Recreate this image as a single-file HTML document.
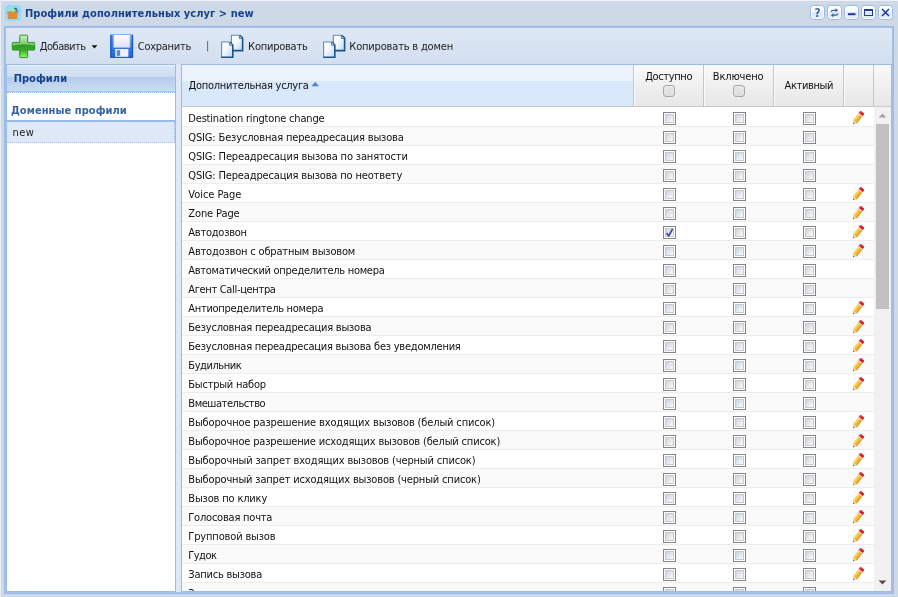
<!DOCTYPE html>
<html lang="ru"><head><meta charset="utf-8"><title>Профили дополнительных услуг</title>
<style>
html,body{margin:0;padding:0;}
body{width:898px;height:597px;overflow:hidden;background:#ced9e7;font-family:"DejaVu Sans Condensed","Liberation Sans",sans-serif;font-size:11px;color:#000;position:relative;}
*{box-sizing:border-box;}
.abs{position:absolute;}
#win{left:0;top:0;width:898px;height:597px;background:#ced9e7;border-top:1px solid #eef2f8;border-left:1px solid #e9eef6;}
#wrap{left:0;top:0;width:898px;height:597px;will-change:transform;}
#title{left:25px;top:7px;font-weight:bold;font-size:11px;color:#15428b;line-height:14px;white-space:nowrap;}
.tool{position:absolute;top:5px;width:15px;height:15px;}
#body{left:4px;top:26px;width:890px;height:568px;border:1px solid #99bbe8;background:#dfe8f6;}
#body2{left:5px;top:27px;width:888px;height:566px;border:1px solid #a3c1ea;background:#dfe8f6;}
#tbar{left:6px;top:28px;width:886px;height:36px;background:linear-gradient(#dfe8f5,#d2dff0);}
.tbtxt{position:absolute;top:40px;line-height:14px;color:#222;white-space:nowrap;}
.ico{position:absolute;top:34px;width:24px;height:24px;}
#left{left:6px;top:64px;width:170px;height:528px;border:1px solid #99bbe8;background:#fff;}
#lhead{left:0;top:0;width:168px;height:27px;background:linear-gradient(#f0f5fc 0,#f0f5fc 1px,#d9e5f5 1px,#ccddf2 12px,#b5cbea 12px,#cbdcf2 26px);border-bottom:1px solid #c3c3c3;}
#ldot{left:0;top:27px;width:168px;height:0;border-top:1px dotted #8db2e3;}
#gline{left:0;top:55px;width:168px;height:2px;background:#99bbe8;}
#lhead span{position:absolute;left:8.6px;top:7px;font-weight:bold;color:#15428b;line-height:14px;}
#dom{left:4px;top:39px;font-weight:bold;color:#3764a0;line-height:14px;white-space:nowrap;}
#sel{left:0;top:57px;width:168px;height:21px;background:#dfe8f6;border-right:1px dotted #a3bae9;border-bottom:1px dotted #a3bae9;}
#sel span{position:absolute;left:5.6px;top:4px;line-height:14px;color:#222;letter-spacing:0.35px;}
#grid{left:181px;top:64px;width:711px;height:528px;border:1px solid #99bbe8;background:#fff;overflow:hidden;}
#ghead{left:0;top:0;width:709px;height:42px;background:linear-gradient(#f9f9f9,#e8e7e7);border-bottom:1px solid #c9c9c9;}
.hd{position:absolute;top:0;height:41px;border-right:1px solid #c6c6c6;border-left:1px solid #fbfbfb;text-align:center;color:#111;}
.hd span{white-space:nowrap;}
#h0{left:0;width:452px;background:linear-gradient(#edf4fd 0,#eaf2fc 38%,#d9e8fb 40%,#d9e8fb 100%);border-left:none;border-right:1px solid #aaccf6;text-align:left;}
.hcb{position:absolute;left:28px;top:20px;width:12px;height:12px;border:1px solid #a8a8a8;border-radius:3px;background:linear-gradient(#e9e9e9,#dddddd);}
#rows{left:0;top:43px;width:692px;height:483px;overflow:hidden;}
.row{height:19px;width:692px;border-bottom:1px solid #ededed;background:#fff;position:relative;}
.row.alt{background:#fafafa;}
.row>div{position:absolute;top:0;height:18px;}
.c0{left:6.3px;top:2px !important;line-height:17px;white-space:nowrap;color:#111;}
.c1{width:70px;}
.row .c1:nth-child(2){left:452px;}
.row .c1:nth-child(3){left:522px;}
.row .c1:nth-child(4){left:592px;}
.c2{left:662px;width:30px;}
.cb{position:absolute;left:29px;top:4px;width:13px;height:13px;border:1px solid #858585;background:#fff;}
.cb:before{content:"";position:absolute;left:1px;top:1px;width:7px;height:7px;border:1px solid #c6c9cd;background:linear-gradient(135deg,#cfd4da 0,#e6e9ec 55%,#fbfbfb 100%);}
.cb svg{position:absolute;left:-1px;top:-1px;}
.pen{position:absolute;left:6px;top:2px;}
#sb{left:692px;top:42px;width:17px;height:484px;background:#f1f1f1;}
#thumb{left:2px;top:17px;width:13px;height:185px;background:#c1c1c1;}
#r0{letter-spacing:-0.187px;}
#r1{letter-spacing:-0.154px;}
#r2{letter-spacing:-0.142px;}
#r3{letter-spacing:-0.154px;}
#r4{letter-spacing:-0.020px;}
#r5{letter-spacing:-0.112px;}
#r6{letter-spacing:-0.240px;}
#r7{letter-spacing:-0.185px;}
#r8{letter-spacing:-0.280px;}
#r9{letter-spacing:-0.329px;}
#r10{letter-spacing:-0.286px;}
#r11{letter-spacing:-0.219px;}
#r12{letter-spacing:-0.229px;}
#r13{letter-spacing:-0.450px;}
#r14{letter-spacing:-0.225px;}
#r15{letter-spacing:-0.435px;}
#r16{letter-spacing:-0.148px;}
#r17{letter-spacing:-0.162px;}
#r18{letter-spacing:-0.150px;}
#r19{letter-spacing:-0.164px;}
#r20{letter-spacing:-0.165px;}
#r21{letter-spacing:-0.219px;}
#r22{letter-spacing:-0.153px;}
#r23{letter-spacing:-0.540px;}
#r24{letter-spacing:-0.224px;}
#t0{letter-spacing:-0.489px;margin-left:-0.54px;}
#t1{letter-spacing:-0.270px;margin-left:-0.54px;}
#t2{letter-spacing:-0.240px;margin-left:-0.90px;}
#t3{letter-spacing:-0.181px;margin-left:-1.44px;}
#title{letter-spacing:0.055px;}
#lh{letter-spacing:0.060px;margin-left:-1.98px;}
#dom{letter-spacing:0.060px;}
#h0t{letter-spacing:-0.279px;margin-left:0.18px;}
#h1t{letter-spacing:-0.361px;margin-left:-0.36px;}
#h2t{letter-spacing:-0.155px;margin-left:-0.90px;}
#h3t{letter-spacing:-0.360px;margin-left:-0.18px;}

</style></head><body>
<svg width="0" height="0" style="position:absolute"><defs>
<linearGradient id="tg" x1="0" y1="0" x2="0" y2="1"><stop offset="0" stop-color="#fff"/><stop offset="0.45" stop-color="#f4f8fe"/><stop offset="0.5" stop-color="#d9e7fb"/><stop offset="1" stop-color="#e4eefc"/></linearGradient>
<g id="toolbg"><rect x="0.5" y="0.5" width="14" height="14" rx="3" fill="#fff" stroke="#94b7e6"/><rect x="2" y="2" width="11" height="11" fill="url(#tg)"/></g>
<linearGradient id="pg" x1="0" y1="0" x2="1" y2="1"><stop offset="0" stop-color="#fff"/><stop offset="0.45" stop-color="#f4f8fe"/><stop offset="1" stop-color="#bcd6f6"/></linearGradient>
<g id="page"><path d="M0.8 0.8 H9 L12 3.8 V16 H0.8 Z" fill="url(#pg)"/><path d="M0.8 16.4 V0.8 H9" fill="none" stroke="#5f8fb5" stroke-width="1.1"/><path d="M9 0.8 L12 3.8 V16.2 H0.4" fill="none" stroke="#1b5587" stroke-width="1.6"/><path d="M8.8 1.3 V4 H11.5" fill="#dbe9fb" stroke="#2d6a9c" stroke-width="0.9"/></g>
<g id="copy"><use href="#page" x="10.6" y="0.4"/><use href="#page" x="0.8" y="7.2"/></g>
<g id="pencil"><g transform="translate(12.5 2.2) rotate(38)">
<path d="M-2.6 3 V1 Q-2.6 0 -1.6 0 H1.6 Q2.6 0 2.6 1 V3Z" fill="#de1b25"/>
<path d="M-2.6 3 V1 Q-2.6 0 -1.6 0 H-0.9 V3Z" fill="#ec4a52"/>
<rect x="-2.6" y="3" width="5.2" height="0.9" fill="#dcdad2"/>
<rect x="-2.6" y="3.9" width="1.6" height="8.5" fill="#f9d566"/>
<rect x="-1" y="3.9" width="1.9" height="8.5" fill="#f4b92b"/>
<rect x="0.9" y="3.9" width="1.7" height="8.5" fill="#e39a15"/>
<path d="M-2.6 12.3 H2.6 L0 15.1Z" fill="#eccb9f"/>
<path d="M-0.8 14.1 H0.8 L0 15.2Z" fill="#4a4038"/>
</g></g></defs></svg>
<div id="wrap" class="abs">
<div id="win" class="abs"></div>
<svg class="abs" style="left:5px;top:5px" width="16" height="16" viewBox="0 0 16 16"><rect width="16" height="16" rx="4" fill="#8fdcf3"/><path d="M9.2 2.6 L12.2 3.4 L11.6 8 H8.8Z" fill="#3b5b8c"/><rect x="7" y="3.9" width="3.5" height="3.9" rx="0.5" fill="#9cef88"/><path d="M2.2 6.75 H4 L4.4 6.1 H5.6 L6 6.75 H12.8 L12 13.9 H3.2Z" fill="#e08a35"/><path d="M11.9 4.4 L14.4 6.6 L12.4 8.1 L11.6 7Z" fill="#9b8bf0"/></svg>
<div id="title" class="abs">Профили дополнительных услуг &gt; new</div>
<svg class="tool" style="left:810px" width="15" height="15" viewBox="0 0 15 15"><use href="#toolbg"/><text x="7.6" y="11.6" text-anchor="middle" font-family="DejaVu Sans Condensed, Liberation Sans, sans-serif" font-weight="bold" font-size="11.6" fill="#41639f">?</text></svg>
<svg class="tool" style="left:827px" width="15" height="15" viewBox="0 0 15 15"><use href="#toolbg"/><g transform="translate(7.5 7.75) scale(0.84) translate(-7.5 -7.5)"><g fill="none" stroke="#3b5fa3" stroke-width="1.5"><path d="M3.6 6.4 Q3.8 4.6 6 4.6 H10"/><path d="M11.4 8.6 Q11.2 10.4 9 10.4 H5"/></g><path d="M8.8 2.2 L11.9 4.6 L8.8 7 Z" fill="#3b5fa3"/><path d="M6.2 8 L3.1 10.4 L6.2 12.8 Z" fill="#3b5fa3"/></g></svg>
<svg class="tool" style="left:844px" width="15" height="15" viewBox="0 0 15 15"><use href="#toolbg"/><rect x="4" y="8.2" width="7.5" height="2" fill="#22389a"/></svg>
<svg class="tool" style="left:861px" width="15" height="15" viewBox="0 0 15 15"><use href="#toolbg"/><rect x="3.5" y="4.5" width="8" height="6" fill="none" stroke="#22389a" stroke-width="1"/><rect x="3" y="4" width="9" height="2" fill="#22389a"/></svg>
<svg class="tool" style="left:878px" width="15" height="15" viewBox="0 0 15 15"><use href="#toolbg"/><path d="M4 4 L11 11 M11 4 L4 11" stroke="#22389a" stroke-width="1.5" fill="none"/></svg>
<div id="body" class="abs"></div>
<div id="body2" class="abs"></div>
<div id="tbar" class="abs"></div>

<svg class="abs" style="left:10px;top:33px" width="28" height="28" viewBox="10 33 28 28"><defs><linearGradient id="gp1" gradientUnits="userSpaceOnUse" x1="0" y1="34.6" x2="0" y2="58"><stop offset="0" stop-color="#d2f2c8"/><stop offset="0.3" stop-color="#93d684"/><stop offset="0.5" stop-color="#62bd53"/><stop offset="1" stop-color="#62bd53"/></linearGradient><linearGradient id="gp2" gradientUnits="userSpaceOnUse" x1="0" y1="44" x2="0" y2="58"><stop offset="0" stop-color="#2a9422"/><stop offset="0.45" stop-color="#3aa92f"/><stop offset="0.75" stop-color="#6ddc48"/><stop offset="1" stop-color="#93fb5e"/></linearGradient><clipPath id="cpl"><path id="plusp" d="M20.6 35.1 H26.7 Q27.6 35.1 27.6 36 V42.4 H33.8 Q34.7 42.4 34.7 43.3 V49.2 Q34.7 50.1 33.8 50.1 H27.6 V56.7 Q27.6 57.6 26.7 57.6 H20.6 Q19.7 57.6 19.7 56.7 V50.1 H13.2 Q12.3 50.1 12.3 49.2 V43.3 Q12.3 42.4 13.2 42.4 H19.7 V36 Q19.7 35.1 20.6 35.1Z"/></clipPath></defs><use href="#plusp" fill="url(#gp1)"/><path clip-path="url(#cpl)" d="M10 46.6 Q23.5 42.6 37 46.6 V60 H10Z" fill="url(#gp2)"/><use href="#plusp" fill="none" stroke="#23901f" stroke-width="1" stroke-opacity="0.9"/></svg>
<div class="tbtxt" id="t0" style="left:40.3px">Добавить</div>
<svg class="abs" style="left:91px;top:45px" width="7" height="4" viewBox="0 0 7 4"><path d="M0.6 0.3 H6.4 L3.5 3.6Z" fill="#111"/></svg>
<svg class="ico" style="left:110px" viewBox="0 0 24 24"><defs><linearGradient id="gs" x1="0" y1="0" x2="0" y2="1"><stop offset="0" stop-color="#5ea4ea"/><stop offset="0.5" stop-color="#3b7bd6"/><stop offset="1" stop-color="#1f66e0"/></linearGradient><linearGradient id="gl" x1="0" y1="0" x2="0" y2="1"><stop offset="0" stop-color="#fdfdff"/><stop offset="1" stop-color="#dfe1fb"/></linearGradient></defs><rect x="0.2" y="0.3" width="22.9" height="23.4" rx="0.6" fill="url(#gs)"/><rect x="0.3" y="1" width="1.2" height="22" fill="#1c55c8"/><rect x="21.9" y="1" width="1.2" height="22" fill="#1c55c8"/><rect x="0.2" y="22.8" width="22.9" height="0.9" fill="#1a3fc0"/><rect x="3.2" y="1" width="17.2" height="12.6" fill="url(#gl)"/><rect x="3.2" y="1" width="0.8" height="12.6" fill="#3a6cc4" opacity=".5"/><rect x="19.6" y="1" width="0.8" height="12.6" fill="#3a6cc4" opacity=".5"/><rect x="5.2" y="15" width="13.2" height="7.8" fill="#eeeefc"/><rect x="6.8" y="16.2" width="3.3" height="5.6" fill="#4a8be0"/></svg>
<div class="tbtxt" id="t1" style="left:138.3px">Сохранить</div>
<div class="tbtxt" id="pipe" style="left:206px;top:39px;color:#4e535a">|</div>
<svg class="ico" style="left:220px" viewBox="0 0 24 24"><use href="#copy"/></svg>
<div class="tbtxt" id="t2" style="left:249px">Копировать</div>
<svg class="ico" style="left:322px" viewBox="0 0 24 24"><use href="#copy"/></svg>
<div class="tbtxt" id="t3" style="left:350.8px">Копировать в домен</div>

<div id="left" class="abs">
 <div id="lhead" class="abs"><span id="lh">Профили</span></div>
 <div id="ldot" class="abs"></div><div id="gline" class="abs"></div>
 <div id="dom" class="abs">Доменные профили</div>
 <div id="sel" class="abs"><span id="newt">new</span></div>
</div>
<div id="grid" class="abs">
 <div id="ghead" class="abs">
  <div class="hd" id="h0"><span id="h0t" class="abs" style="left:6.4px;top:14px;line-height:14px">Дополнительная услуга</span><svg class="abs" style="left:129.2px;top:17px" width="9" height="5" viewBox="0 0 9 5"><path d="M0.4 4.3 L4.2 -0.1 L8 4.3 Z" fill="#4b80cb"/></svg></div>
  <div class="hd" style="left:452px;width:70px"><span id="h1t" class="abs" style="left:0;width:68px;top:5px;line-height:14px">Доступно</span><i class="hcb"></i></div>
  <div class="hd" style="left:522px;width:70px"><span id="h2t" class="abs" style="left:0;width:68px;top:5px;line-height:14px">Включено</span><i class="hcb"></i></div>
  <div class="hd" style="left:592px;width:70px"><span id="h3t" class="abs" style="left:0;width:68px;top:14px;line-height:14px">Активный</span></div>
  <div class="hd" style="left:662px;width:30px"></div>
 </div>
 <div id="rows" class="abs">
<div class="row"><div class="c0" id="r0">Destination ringtone change</div><div class="c1"><span class="cb"></span></div><div class="c1"><span class="cb"></span></div><div class="c1"><span class="cb"></span></div><div class="c2"><svg class="pen" width="16" height="16" viewBox="0 0 16 16"><use href="#pencil"/></svg></div></div>
<div class="row alt"><div class="c0" id="r1">QSIG: Безусловная переадресация вызова</div><div class="c1"><span class="cb"></span></div><div class="c1"><span class="cb"></span></div><div class="c1"><span class="cb"></span></div><div class="c2"></div></div>
<div class="row"><div class="c0" id="r2">QSIG: Переадресация вызова по занятости</div><div class="c1"><span class="cb"></span></div><div class="c1"><span class="cb"></span></div><div class="c1"><span class="cb"></span></div><div class="c2"></div></div>
<div class="row alt"><div class="c0" id="r3">QSIG: Переадресация вызова по неответу</div><div class="c1"><span class="cb"></span></div><div class="c1"><span class="cb"></span></div><div class="c1"><span class="cb"></span></div><div class="c2"></div></div>
<div class="row"><div class="c0" id="r4">Voice Page</div><div class="c1"><span class="cb"></span></div><div class="c1"><span class="cb"></span></div><div class="c1"><span class="cb"></span></div><div class="c2"><svg class="pen" width="16" height="16" viewBox="0 0 16 16"><use href="#pencil"/></svg></div></div>
<div class="row alt"><div class="c0" id="r5">Zone Page</div><div class="c1"><span class="cb"></span></div><div class="c1"><span class="cb"></span></div><div class="c1"><span class="cb"></span></div><div class="c2"><svg class="pen" width="16" height="16" viewBox="0 0 16 16"><use href="#pencil"/></svg></div></div>
<div class="row"><div class="c0" id="r6">Автодозвон</div><div class="c1"><span class="cb"><svg viewBox="0 0 13 13" width="13" height="13"><path d="M3.5 7.1 L5.8 9.8 L9.6 2.8" fill="none" stroke="#3349a0" stroke-width="1.7"/></svg></span></div><div class="c1"><span class="cb"></span></div><div class="c1"><span class="cb"></span></div><div class="c2"><svg class="pen" width="16" height="16" viewBox="0 0 16 16"><use href="#pencil"/></svg></div></div>
<div class="row alt"><div class="c0" id="r7">Автодозвон с обратным вызовом</div><div class="c1"><span class="cb"></span></div><div class="c1"><span class="cb"></span></div><div class="c1"><span class="cb"></span></div><div class="c2"><svg class="pen" width="16" height="16" viewBox="0 0 16 16"><use href="#pencil"/></svg></div></div>
<div class="row"><div class="c0" id="r8">Автоматический определитель номера</div><div class="c1"><span class="cb"></span></div><div class="c1"><span class="cb"></span></div><div class="c1"><span class="cb"></span></div><div class="c2"></div></div>
<div class="row alt"><div class="c0" id="r9">Агент Call-центра</div><div class="c1"><span class="cb"></span></div><div class="c1"><span class="cb"></span></div><div class="c1"><span class="cb"></span></div><div class="c2"></div></div>
<div class="row"><div class="c0" id="r10">Антиопределитель номера</div><div class="c1"><span class="cb"></span></div><div class="c1"><span class="cb"></span></div><div class="c1"><span class="cb"></span></div><div class="c2"><svg class="pen" width="16" height="16" viewBox="0 0 16 16"><use href="#pencil"/></svg></div></div>
<div class="row alt"><div class="c0" id="r11">Безусловная переадресация вызова</div><div class="c1"><span class="cb"></span></div><div class="c1"><span class="cb"></span></div><div class="c1"><span class="cb"></span></div><div class="c2"><svg class="pen" width="16" height="16" viewBox="0 0 16 16"><use href="#pencil"/></svg></div></div>
<div class="row"><div class="c0" id="r12">Безусловная переадресация вызова без уведомления</div><div class="c1"><span class="cb"></span></div><div class="c1"><span class="cb"></span></div><div class="c1"><span class="cb"></span></div><div class="c2"><svg class="pen" width="16" height="16" viewBox="0 0 16 16"><use href="#pencil"/></svg></div></div>
<div class="row alt"><div class="c0" id="r13">Будильник</div><div class="c1"><span class="cb"></span></div><div class="c1"><span class="cb"></span></div><div class="c1"><span class="cb"></span></div><div class="c2"><svg class="pen" width="16" height="16" viewBox="0 0 16 16"><use href="#pencil"/></svg></div></div>
<div class="row"><div class="c0" id="r14">Быстрый набор</div><div class="c1"><span class="cb"></span></div><div class="c1"><span class="cb"></span></div><div class="c1"><span class="cb"></span></div><div class="c2"><svg class="pen" width="16" height="16" viewBox="0 0 16 16"><use href="#pencil"/></svg></div></div>
<div class="row alt"><div class="c0" id="r15">Вмешательство</div><div class="c1"><span class="cb"></span></div><div class="c1"><span class="cb"></span></div><div class="c1"><span class="cb"></span></div><div class="c2"></div></div>
<div class="row"><div class="c0" id="r16">Выборочное разрешение входящих вызовов (белый список)</div><div class="c1"><span class="cb"></span></div><div class="c1"><span class="cb"></span></div><div class="c1"><span class="cb"></span></div><div class="c2"><svg class="pen" width="16" height="16" viewBox="0 0 16 16"><use href="#pencil"/></svg></div></div>
<div class="row alt"><div class="c0" id="r17">Выборочное разрешение исходящих вызовов (белый список)</div><div class="c1"><span class="cb"></span></div><div class="c1"><span class="cb"></span></div><div class="c1"><span class="cb"></span></div><div class="c2"><svg class="pen" width="16" height="16" viewBox="0 0 16 16"><use href="#pencil"/></svg></div></div>
<div class="row"><div class="c0" id="r18">Выборочный запрет входящих вызовов (черный список)</div><div class="c1"><span class="cb"></span></div><div class="c1"><span class="cb"></span></div><div class="c1"><span class="cb"></span></div><div class="c2"><svg class="pen" width="16" height="16" viewBox="0 0 16 16"><use href="#pencil"/></svg></div></div>
<div class="row alt"><div class="c0" id="r19">Выборочный запрет исходящих вызовов (черный список)</div><div class="c1"><span class="cb"></span></div><div class="c1"><span class="cb"></span></div><div class="c1"><span class="cb"></span></div><div class="c2"><svg class="pen" width="16" height="16" viewBox="0 0 16 16"><use href="#pencil"/></svg></div></div>
<div class="row"><div class="c0" id="r20">Вызов по клику</div><div class="c1"><span class="cb"></span></div><div class="c1"><span class="cb"></span></div><div class="c1"><span class="cb"></span></div><div class="c2"><svg class="pen" width="16" height="16" viewBox="0 0 16 16"><use href="#pencil"/></svg></div></div>
<div class="row alt"><div class="c0" id="r21">Голосовая почта</div><div class="c1"><span class="cb"></span></div><div class="c1"><span class="cb"></span></div><div class="c1"><span class="cb"></span></div><div class="c2"><svg class="pen" width="16" height="16" viewBox="0 0 16 16"><use href="#pencil"/></svg></div></div>
<div class="row"><div class="c0" id="r22">Групповой вызов</div><div class="c1"><span class="cb"></span></div><div class="c1"><span class="cb"></span></div><div class="c1"><span class="cb"></span></div><div class="c2"><svg class="pen" width="16" height="16" viewBox="0 0 16 16"><use href="#pencil"/></svg></div></div>
<div class="row alt"><div class="c0" id="r23">Гудок</div><div class="c1"><span class="cb"></span></div><div class="c1"><span class="cb"></span></div><div class="c1"><span class="cb"></span></div><div class="c2"><svg class="pen" width="16" height="16" viewBox="0 0 16 16"><use href="#pencil"/></svg></div></div>
<div class="row"><div class="c0" id="r24">Запись вызова</div><div class="c1"><span class="cb"></span></div><div class="c1"><span class="cb"></span></div><div class="c1"><span class="cb"></span></div><div class="c2"><svg class="pen" width="16" height="16" viewBox="0 0 16 16"><use href="#pencil"/></svg></div></div>
<div class="row alt"><div class="c0" id="r25">Запрет входящих вызовов</div><div class="c1"><span class="cb"></span></div><div class="c1"><span class="cb"></span></div><div class="c1"><span class="cb"></span></div><div class="c2"></div></div>
 </div>
 <div id="sb" class="abs"><div id="thumb" class="abs"></div>
 <svg class="abs" style="left:4px;top:6px" width="9" height="5" viewBox="0 0 9 5"><path d="M0.6 4.6 L4.5 0.6 L8.4 4.6 Z" fill="#a3a3a3"/></svg>
 <svg class="abs" style="left:4px;top:473px" width="9" height="5" viewBox="0 0 9 5"><path d="M0.6 0.4 L8.4 0.4 L4.5 4.4 Z" fill="#505050"/></svg>
 </div>
</div>
</div>
</body></html>
